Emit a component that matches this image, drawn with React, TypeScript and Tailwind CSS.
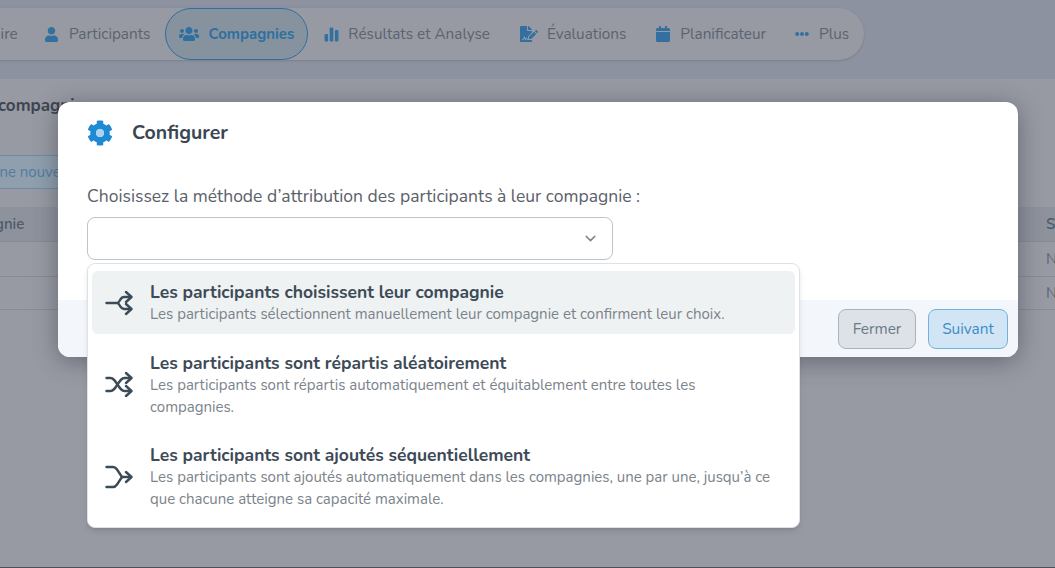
import { FaCalendar, FaCog, FaEllipsisH, FaFileSignature, FaUser, FaUsers } from "react-icons/fa";
import { ChevronDown } from "lucide-react";
import type { ReactNode } from "react";

const FONT = "font-['Nunito','Noto_Sans','Open_Sans',sans-serif]";

function BarsIcon() {
  return (
    <svg width="15" height="15" viewBox="0 0 15 15" fill="currentColor">
      <rect x="0.500" y="7" width="3.600" height="7.500" rx="1" />
      <rect x="5.700" y="0.500" width="3.600" height="14" rx="1" />
      <rect x="10.900" y="3" width="3.600" height="11.500" rx="1" />
    </svg>
  );
}

function NavItem({
  icon,
  label,
  gap,
  className,
}: {
  icon: ReactNode;
  label: string;
  gap: string;
  className: string;
}) {
  return (
    <div className={`flex items-center whitespace-nowrap ${gap} text-[15.300px] text-[#5c636f] ${className}`}>
      <span className="text-[#34709f]">{icon}</span>
      {label}
    </div>
  );
}

// ── Method icons ─────────────────────────────────────────

function MethodSvg({ children }: { children: ReactNode }) {
  return (
    <svg
      width="28"
      height="28"
      viewBox="0 0 28 28"
      fill="none"
      stroke="#3c4b58"
      strokeWidth="2.400"
      strokeLinecap="round"
      strokeLinejoin="round"
    >
      {children}
    </svg>
  );
}

function ChooseIcon() {
  return (
    <MethodSvg>
      <path d="M1.500 14H12.500C14.500 14 15 8 19 8H26" />
      <path d="M12.500 14C14.500 14 15 20 19 20H26" />
      <path d="M21 3L26.500 8L21 13" />
      <path d="M21 15L26.500 20L21 25" />
    </MethodSvg>
  );
}

function ShuffleIcon() {
  return (
    <MethodSvg>
      <path d="M1.500 7H5.500C8.500 7 9.500 9 12.500 13.500S16.500 20 19.500 20H26" />
      <path d="M1.500 20H5.500C8.500 20 9.500 18 12.500 13.500S16.500 7 19.500 7H26" />
      <path d="M21 2L26.500 7L21 12" />
      <path d="M21 15L26.500 20L21 25" />
    </MethodSvg>
  );
}

function SequentialIcon() {
  return (
    <MethodSvg>
      <path d="M1.500 4H8C10 4 11 5 12 6.500L17 14H26" />
      <path d="M1.500 24H8C10 24 11 23 12 21.500L17 14" />
      <path d="M21 9L26.500 14L21 19" />
    </MethodSvg>
  );
}

function MethodOption({
  icon,
  title,
  lines,
  className,
}: {
  icon: ReactNode;
  title: string;
  lines: string[];
  className: string;
}) {
  return (
    <div className={`flex items-center rounded-md pl-[13px] ${className}`}>
      <div className="w-[45px] shrink-0">{icon}</div>
      <div>
        <div className="text-[17.500px] leading-[22px] font-bold text-[#3d4a57]">{title}</div>
        {lines.map((line) => (
          <div key={line} className="text-[15px] leading-[22px] text-[#7b838b]">
            {line}
          </div>
        ))}
      </div>
    </div>
  );
}

export default function App() {
  return (
    <div className={`relative h-[568px] w-[1055px] overflow-hidden bg-[#8c929f] ${FONT}`}>
      {/* Page behind the overlay */}
      <div className="h-[79px] pt-2">
        <div className="-ml-[60px] flex h-[52px] w-[924px] items-center rounded-r-[26px] bg-[#979aa3] pl-[10px] shadow-sm">
          <span className="w-[94px] text-[15.300px] text-[#5c636f]">Inventaire</span>
          <NavItem icon={<FaUser size={15} />} label="Participants" gap="gap-[10px]" className="" />
          <div className="ml-[15px] flex h-[52px] w-[143px] items-center justify-center gap-[9px] rounded-[26px] border border-[#2f6f9f] bg-[#86939f] text-[15px] font-bold text-[#2f6f9f]">
            <FaUsers size={20} />
            Compagnies
          </div>
          <NavItem className="ml-[16px]" icon={<BarsIcon />} label="Résultats et Analyse" gap="gap-[9px]" />
          <NavItem className="ml-[30px]" icon={<FaFileSignature size={18} />} label="Évaluations" gap="gap-[9px]" />
          <NavItem className="ml-[29px]" icon={<FaCalendar size={16} />} label="Planificateur" gap="gap-[9px]" />
          <NavItem className="ml-[29px]" icon={<FaEllipsisH size={14} />} label="Plus" gap="gap-[10px]" />
        </div>
      </div>

      <div className="h-[488px] bg-[#979aa3] pt-[15px]">
        <div className="-ml-[2px] text-[17px] leading-[24px] font-bold text-[#3e4550]">compagnies</div>
        <div className="mt-[37px] flex h-[34px] w-[120px] items-center border-y border-[#6d8ba6] bg-[#8f9fae] text-[15px] text-[#557c9d]">
          <span className="-ml-[9px] whitespace-nowrap">une nouvelle</span>
        </div>
        <div className="mt-[18px] flex h-[35px] items-center justify-between border-b border-[#888b94] bg-[#8e929c] text-[15px] font-semibold text-[#4c5a6a]">
          <span className="-ml-[5px]">gnie</span>
          <span className="w-[9px] overflow-hidden">Statut</span>
        </div>
        <div className="flex h-[35px] items-center justify-end border-b border-[#888b94] text-[15px] text-[#5c636f]">
          <span className="w-[9px] overflow-hidden">Non</span>
        </div>
        <div className="flex h-[33px] items-center justify-end border-b border-[#888b94] text-[15px] text-[#5c636f]">
          <span className="w-[9px] overflow-hidden">Non</span>
        </div>
      </div>
      <div className="h-px bg-[#4a4f59]" />

      {/* Configure dialog */}
      <div className="absolute top-[102px] left-[58px] flex h-[255px] w-[960px] flex-col overflow-hidden rounded-xl bg-white shadow-[0_4px_24px_rgba(40,45,55,0.45)]">
        <div className="flex h-[62px] items-center pl-[29px]">
          <span className="relative flex h-[26px] w-[26px] items-center justify-center text-[#1f8ad4]">
            <FaCog size={26} />
            <span className="absolute h-[8px] w-[8px] rounded-full bg-[#a9d3ee]" />
          </span>
          <span className="ml-[19px] text-[19.500px] font-bold text-[#3b4653]">Configurer</span>
        </div>
        <div className="flex-1 pt-[21px] pl-[29px]">
          <div className="text-[17.500px] leading-[22px] text-[#5a6068]">
            Choisissez la méthode d’attribution des participants à leur compagnie :
          </div>
          <div className="mt-[10px] flex h-[43px] w-[526px] items-center justify-end rounded-lg border border-[#bcc4cf] pr-[13px] text-[#7d848c]">
            <ChevronDown size={17} />
          </div>
        </div>
        <div className="flex h-[57px] shrink-0 items-center justify-end gap-[12px] bg-[#f3f6fa] pr-[10px]">
          <div className="flex h-[40px] w-[78px] items-center justify-center rounded-lg border border-[#a8b3bb] bg-[#dce2e8] text-[15.400px] text-[#6b7a86]">
            Fermer
          </div>
          <div className="flex h-[40px] w-[80px] items-center justify-center rounded-lg border border-[#72b2e2] bg-[#d2e5f4] text-[15.400px] text-[#3d8cc9]">
            Suivant
          </div>
        </div>
      </div>

      {/* Open select menu */}
      <div className="absolute top-[263px] left-[87px] flex h-[265px] w-[713px] flex-col rounded-lg border border-[#dde2e7] bg-white px-1 pt-[7px] shadow-md">
        <MethodOption
          className="h-[63px] bg-[#eff2f3]"
          icon={<ChooseIcon />}
          title="Les participants choisissent leur compagnie"
          lines={["Les participants sélectionnent manuellement leur compagnie et confirment leur choix."]}
        />
        <MethodOption
          className="mt-[7px] h-[88px]"
          icon={<ShuffleIcon />}
          title="Les participants sont répartis aléatoirement"
          lines={["Les participants sont répartis automatiquement et équitablement entre toutes les", "compagnies."]}
        />
        <MethodOption
          className="mt-[4px] h-[88px]"
          icon={<SequentialIcon />}
          title="Les participants sont ajoutés séquentiellement"
          lines={[
            "Les participants sont ajoutés automatiquement dans les compagnies, une par une, jusqu’à ce",
            "que chacune atteigne sa capacité maximale.",
          ]}
        />
      </div>
    </div>
  );
}
